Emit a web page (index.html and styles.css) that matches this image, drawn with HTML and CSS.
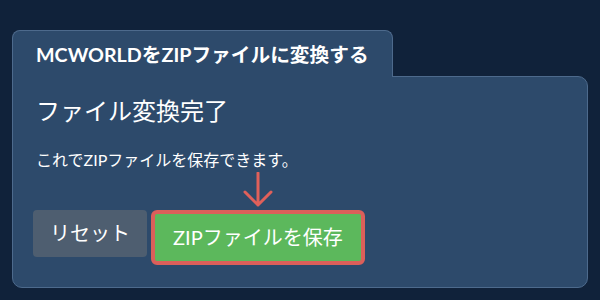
FILE: index.html
```html
<!DOCTYPE html>
<html lang="ja">
<head>
    <meta charset="UTF-8">
    <title>MCWORLDをZIPファイルに変換する</title>
    <link rel="stylesheet" href="styles.css">
</head>
<body>
    <div class="converter">
        <div class="tab">MCWORLDをZIPファイルに変換する</div>
        <div class="panel">
            <h2 class="done-title">ファイル変換完了</h2>
            <p class="done-text">これでZIPファイルを保存できます。</p>
            <div class="actions">
                <button class="btn btn-reset">リセット</button>
                <div class="save-wrap">
                    <svg class="hint-arrow" width="30" height="36" viewBox="0 0 30 36">
                        <path d="M15 1 V33 M2 20 L15 33 L28 20" fill="none" stroke="#e0605a" stroke-width="3" stroke-linecap="round" stroke-linejoin="round"/>
                    </svg>
                    <button class="btn btn-save">ZIPファイルを保存</button>
                </div>
            </div>
        </div>
    </div>
</body>
</html>
```

FILE: styles.css
```css
:root {
    --page: #10223a;
    --panel: #2d4a6b;
    --line: #4d6a8c;
    --reset: #4e5e70;
    --green: #5cb85c;
    --red: #dc5f5a;
}

body {
    margin: 0;
    background: var(--page);
    font-family: 'Lato', 'Noto Sans CJK JP', sans-serif;
    color: #fff;
}

.converter {
    padding: 30px 12px 0;
}

.tab {
    display: inline-block;
    position: relative;
    z-index: 1;
    margin-bottom: -1px;
    padding: 12px 23px 10px;
    background: var(--panel);
    border: 1px solid var(--line);
    border-bottom: none;
    border-radius: 8px 8px 0 0;
    font-size: 19.7px;
    font-weight: bold;
    line-height: 24px;
    white-space: nowrap;
}

.panel {
    background: var(--panel);
    border: 1px solid var(--line);
    border-radius: 0 10px 10px 10px;
    padding: 18px 23px 20px;
    height: 172px;
}

.done-title {
    margin: 0;
    font-size: 24px;
    font-weight: normal;
    line-height: 32px;
}

.done-text {
    margin: 22px 0 0;
    font-size: 16px;
    line-height: 22px;
}

.actions {
    display: flex;
    align-items: flex-start;
    gap: 4px;
    margin: 39px 0 0 -3px;
}

.btn {
    font-family: inherit;
    font-size: 20px;
    line-height: 27px;
    color: #fff;
    border: none;
    border-radius: 4px;
    padding: 10px 17px;
    cursor: pointer;
}

.btn-reset {
    background: var(--reset);
}

.save-wrap {
    position: relative;
}

.btn-save {
    background: var(--green);
    border: 4px solid var(--red);
    border-radius: 6px;
    padding: 10px 18px;
}

.hint-arrow {
    position: absolute;
    left: 50%;
    bottom: 100%;
    margin-bottom: 2px;
    transform: translateX(-50%);
}
```
